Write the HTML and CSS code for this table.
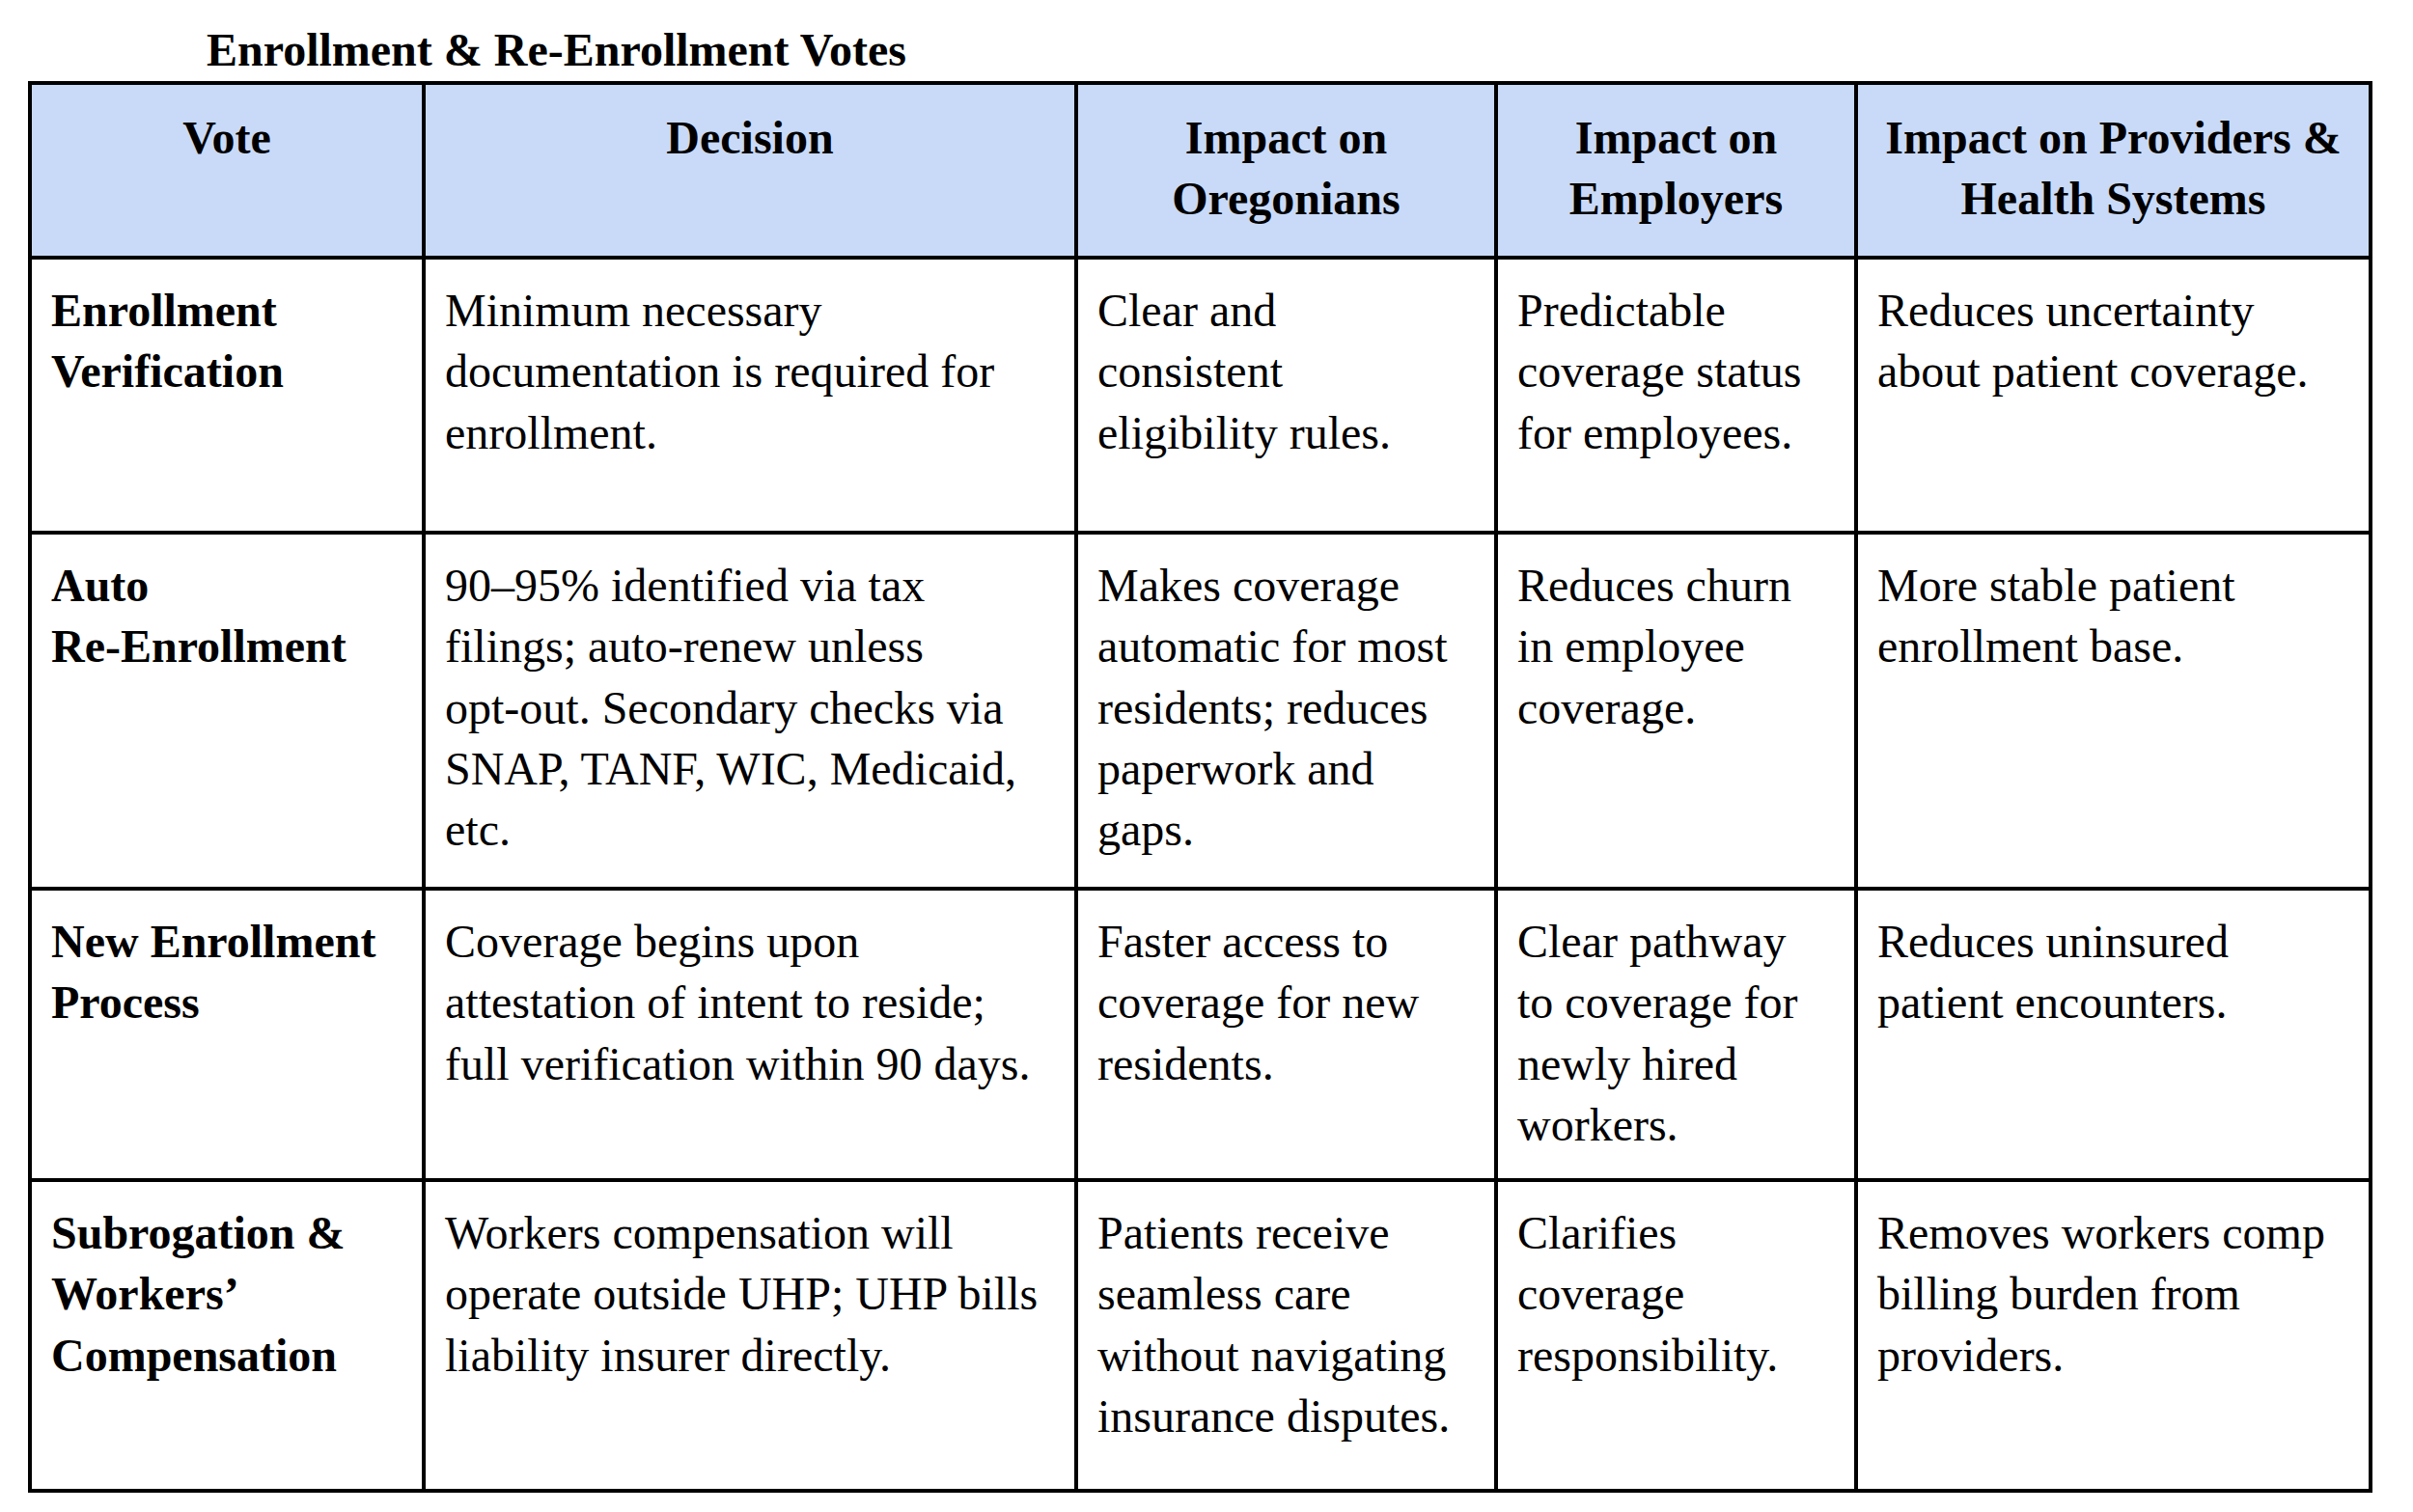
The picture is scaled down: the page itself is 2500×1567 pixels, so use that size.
FILE: index.html
```html
<!DOCTYPE html>
<html lang="en">
<head>
<meta charset="utf-8">
<title>Enrollment &amp; Re-Enrollment Votes</title>
<link rel="stylesheet" href="styles.css">
</head>
<body>
<main class="page">
  <h1 class="title">Enrollment &amp; Re-Enrollment Votes</h1>
  <table class="votes">
    <colgroup>
      <col class="c-vote">
      <col class="c-decision">
      <col class="c-oregon">
      <col class="c-employers">
      <col class="c-providers">
    </colgroup>
    <thead>
      <tr class="row-head">
        <th>Vote</th>
        <th>Decision</th>
        <th>Impact on Oregonians</th>
        <th>Impact on Employers</th>
        <th>Impact on Providers &amp; Health Systems</th>
      </tr>
    </thead>
    <tbody>
      <tr class="row-1">
        <td class="vote">Enrollment Verification</td>
        <td>Minimum necessary documentation is required for enrollment.</td>
        <td>Clear and consistent eligibility rules.</td>
        <td>Predictable coverage status for employees.</td>
        <td>Reduces uncertainty about patient coverage.</td>
      </tr>
      <tr class="row-2">
        <td class="vote">Auto Re-&#8288;Enrollment</td>
        <td>90–95% identified via tax filings; auto-renew unless opt-&#8288;out. Secondary checks via SNAP, TANF, WIC, Medicaid, etc.</td>
        <td>Makes coverage automatic for most residents; reduces paperwork and gaps.</td>
        <td>Reduces churn in employee coverage.</td>
        <td>More stable patient enrollment base.</td>
      </tr>
      <tr class="row-3">
        <td class="vote">New Enrollment Process</td>
        <td>Coverage begins upon attestation of intent to reside; full verification within 90 days.</td>
        <td>Faster access to coverage for new residents.</td>
        <td>Clear pathway to coverage for newly hired workers.</td>
        <td>Reduces uninsured patient encounters.</td>
      </tr>
      <tr class="row-4">
        <td class="vote">Subrogation &amp; Workers’ Compensation</td>
        <td>Workers compensation will operate outside UHP; UHP bills liability insurer directly.</td>
        <td>Patients receive seamless care without navigating insurance disputes.</td>
        <td>Clarifies coverage responsibility.</td>
        <td>Removes workers comp billing burden from providers.</td>
      </tr>
    </tbody>
  </table>
</main>
</body>
</html>
```

FILE: styles.css
```css
* {
  box-sizing: border-box;
}

html, body {
  margin: 0;
  padding: 0;
  background: #ffffff;
}

body {
  font-family: "Liberation Serif", "Times New Roman", serif;
  color: #000000;
  font-size: 48px;
  line-height: 63.3px;
}

.page {
  padding: 20px 0 0 29px;
}

.title {
  margin: 0 0 1px 185px;
  font-size: 48px;
  font-weight: 700;
  line-height: 63px;
  height: 63px;
}

.votes {
  table-layout: fixed;
  width: 2429px;
  border-collapse: separate;
  border-spacing: 0;
  border-top: 4px solid #000;
  border-left: 4px solid #000;
}

.c-vote { width: 408px; }
.c-decision { width: 676px; }
.c-oregon { width: 435px; }
.c-employers { width: 373px; }
.c-providers { width: 533px; }

.votes th,
.votes td {
  border-right: 4px solid #000;
  border-bottom: 4px solid #000;
  vertical-align: top;
  text-align: left;
  font-weight: 400;
  padding: 21px 23px 0 20px;
}

.votes th {
  background: #c9daf8;
  font-weight: 700;
  text-align: center;
  padding: 23px 20px 0 20px;
}

.votes td.vote {
  font-weight: 700;
}

.row-head { height: 181px; }
.row-1 { height: 285px; }
.row-2 { height: 369px; }
.row-3 { height: 302px; }
.row-4 { height: 322px; }
```
